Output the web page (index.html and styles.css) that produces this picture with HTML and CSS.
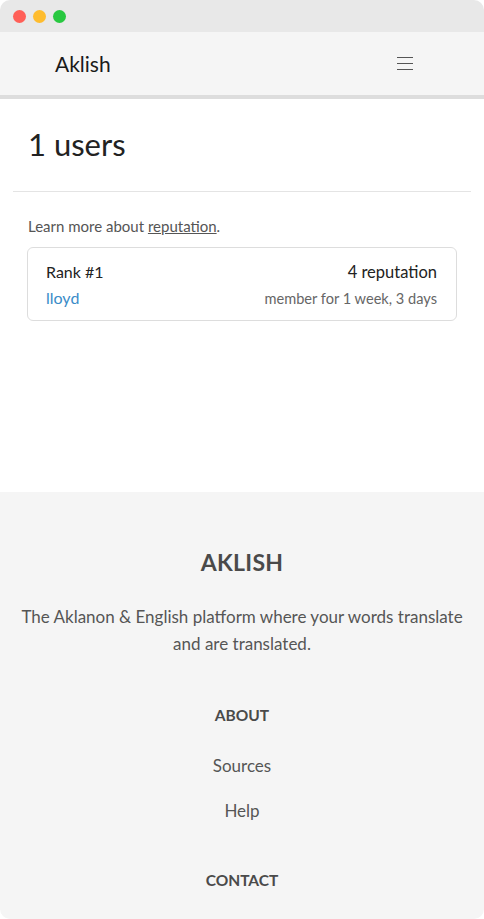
FILE: index.html
```html
<!DOCTYPE html>
<html lang="en">
<head>
<meta charset="utf-8">
<title>Aklish - Users</title>
<link rel="stylesheet" href="styles.css">
</head>
<body>
<div class="window">
  <div class="titlebar">
    <span class="dot dot-red"></span>
    <span class="dot dot-yellow"></span>
    <span class="dot dot-green"></span>
  </div>
  <div class="page">
    <nav class="navbar">
      <a class="brand" href="#">Aklish</a>
      <button class="burger" aria-label="Menu">
        <span></span><span></span><span></span>
      </button>
    </nav>
    <main class="main">
      <h1 class="title">1 users</h1>
      <hr class="divider">
      <p class="learn">Learn more about <a href="#">reputation</a>.</p>
      <div class="card">
        <div class="card-row">
          <span class="rank">Rank #1</span>
          <span class="rep">4 reputation</span>
        </div>
        <div class="card-row">
          <a class="user" href="#">lloyd</a>
          <span class="member">member for 1 week, 3 days</span>
        </div>
      </div>
    </main>
    <footer class="footer">
      <h2 class="foot-brand">AKLISH</h2>
      <p class="foot-desc">The Aklanon &amp; English platform where your words translate and are translated.</p>
      <h3 class="foot-head foot-about">ABOUT</h3>
      <a class="foot-link" href="#">Sources</a>
      <a class="foot-link foot-help" href="#">Help</a>
      <h3 class="foot-head foot-contact">CONTACT</h3>
    </footer>
  </div>
</div>
</body>
</html>
```
FILE: styles.css
```css
* { box-sizing: border-box; }
html, body { margin: 0; padding: 0; background: #ffffff; }
body { font-family: Lato, "Liberation Sans", sans-serif; }

.window {
  height: 919px;
  border-radius: 10px;
  overflow: hidden;
  display: flex;
  flex-direction: column;
  background: #ffffff;
}

.titlebar {
  height: 32px;
  flex: none;
  background: #e8e8e8;
  display: flex;
  align-items: center;
  gap: 7px;
  padding-left: 13px;
}
.dot { width: 13px; height: 13px; border-radius: 50%; display: block; }
.dot-red { background: #ff5f57; }
.dot-yellow { background: #febc2e; }
.dot-green { background: #28c840; }

.page { flex: 1; display: flex; flex-direction: column; overflow: hidden; }

.navbar {
  height: 67px;
  flex: none;
  background: #f5f5f5;
  border-bottom: 4px solid #dddddd;
  display: flex;
  align-items: center;
  justify-content: space-between;
  padding: 0 71px 0 55px;
}
.brand {
  font-size: 21px;
  color: #1a1a1a;
  text-decoration: none;
  line-height: 28px;
  margin-top: 0;
}
.burger {
  width: 16px;
  padding: 0;
  border: 0;
  background: none;
  display: flex;
  flex-direction: column;
  gap: 5px;
  margin-top: 0;
}
.burger span { display: block; height: 1px; background: #555555; }

.main { height: 393px; flex: none; }
.title {
  margin: 25px 28px 0;
  font-size: 31px;
  font-weight: 400;
  line-height: 40px;
  color: #222222;
}
.divider {
  margin: 27px 13px 0;
  border: 0;
  border-top: 1px solid #e4e4e4;
  height: 0;
}
.learn {
  margin: 24px 28px 0;
  font-size: 15px;
  line-height: 20px;
  color: #555555;
}
.learn a { color: #555555; text-decoration: underline; }

.card {
  margin: 11px 27px 0;
  border: 1px solid #dddddd;
  border-radius: 6px;
  padding: 13px 19px 10px 18px;
  display: flex;
  flex-direction: column;
  gap: 4px;
}
.card-row { display: flex; justify-content: space-between; align-items: baseline; line-height: 22px; }
.rank { font-size: 16px; color: #222222; }
.rep { font-size: 16.5px; color: #222222; }
.user { font-size: 16px; color: #3a8cc8; text-decoration: none; }
.member { font-size: 14.6px; color: #666666; }

.footer {
  flex: 1;
  background: #f5f5f5;
  display: flex;
  flex-direction: column;
  align-items: center;
  text-align: center;
  padding: 55px 18px 0;
}
.foot-brand {
  margin: 0;
  font-size: 23px;
  line-height: 30px;
  font-weight: 700;
  color: #4a4a4a;
  letter-spacing: 0.3px;
}
.foot-desc {
  margin: 26px 0 0;
  font-size: 17px;
  line-height: 27px;
  color: #555555;
}
.foot-head {
  margin: 0;
  font-size: 15.5px;
  line-height: 20px;
  font-weight: 700;
  color: #4a4a4a;
}
.foot-about { margin-top: 48px; }
.foot-contact { margin-top: 48px; }
.foot-link {
  font-size: 17px;
  line-height: 22px;
  color: #555555;
  text-decoration: none;
  margin-top: 30px;
}
.foot-help { margin-top: 23px; }
```
